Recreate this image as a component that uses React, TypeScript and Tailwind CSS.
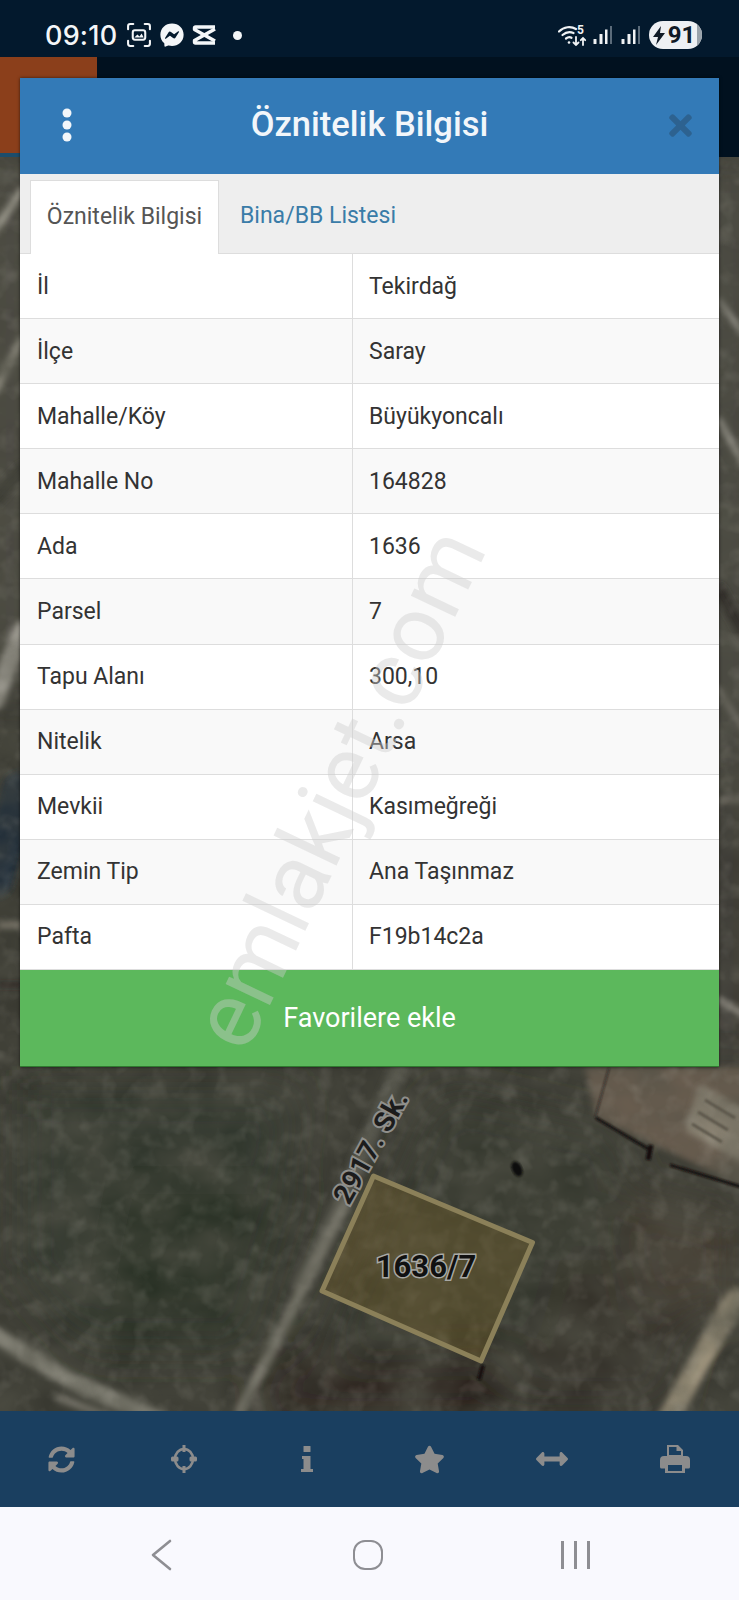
import { FaSyncAlt, FaStar, FaArrowsAltH, FaTimes, FaFacebookMessenger } from "react-icons/fa";

const rows: [string, string][] = [
  ["İl", "Tekirdağ"],
  ["İlçe", "Saray"],
  ["Mahalle/Köy", "Büyükyoncalı"],
  ["Mahalle No", "164828"],
  ["Ada", "1636"],
  ["Parsel", "7"],
  ["Tapu Alanı", "300,10"],
  ["Nitelik", "Arsa"],
  ["Mevkii", "Kasımeğreği"],
  ["Zemin Tip", "Ana Taşınmaz"],
  ["Pafta", "F19b14c2a"],
];

function ScreenshotIcon() {
  return (
    <svg width="26" height="26" viewBox="0 0 25 25" fill="none" stroke="#f4f6f8" strokeWidth="2" strokeLinecap="round">
      <path d="M2 7V4a2 2 0 0 1 2-2h3M18 2h3a2 2 0 0 1 2 2v3M23 18v3a2 2 0 0 1-2 2h-3M7 23H4a2 2 0 0 1-2-2v-3" />
      <rect x="6.500" y="8" width="12" height="9" rx="2" />
      <path d="M8 15l3-3 2 2 2-3 2 4z" fill="#f4f6f8" stroke="none" />
    </svg>
  );
}

function CapCutIcon() {
  return (
    <svg width="26" height="20" viewBox="0 0 26 20" fill="none" stroke="#f4f6f8" strokeWidth="3.400" strokeLinejoin="round">
      <path d="M24 2H4.500a1 1 0 0 0-1 1v1.500L24 16" />
      <path d="M24 18H4.500a1 1 0 0 1-1-1v-1.500L24 4" />
    </svg>
  );
}

function WifiIcon() {
  return (
    <svg width="30" height="22" viewBox="0 0 30 22" fill="none" stroke="#f0f2f4" strokeLinecap="round">
      <path d="M1 7.500C6 2.500 13 2 18 5" strokeWidth="2.200" />
      <path d="M4.500 11C8 8 12 7.500 15.500 9" strokeWidth="2.200" />
      <path d="M8 14.500c2-1.500 4-1.500 5.500-.7" strokeWidth="2.200" />
      <circle cx="11" cy="18.500" r="1.300" fill="#f0f2f4" stroke="none" />
      <path d="M18 13v8M15.500 18.500 18 21l2.500-2.500" strokeWidth="1.800" />
      <path d="M25 21v-7M22.800 16.200 25 14l2.200 2.200" strokeWidth="1.800" />
      <text x="19" y="9.500" fontSize="12" fontWeight="700" fill="#f0f2f4" stroke="none" fontFamily="Roboto, sans-serif">5</text>
    </svg>
  );
}

function SignalIcon() {
  return (
    <svg width="19" height="18" viewBox="0 0 19 18">
      <rect x="0.500" y="13" width="3" height="5" rx="0.500" fill="#f0f2f4" />
      <rect x="6.500" y="8" width="3" height="10" rx="0.500" fill="#f0f2f4" />
      <rect x="12" y="3.500" width="2.500" height="14.500" fill="#f0f2f4" />
      <rect x="17" y="0" width="2" height="18" fill="#5b6b7a" />
    </svg>
  );
}

function TargetIcon() {
  return (
    <svg width="28" height="28" viewBox="0 0 28 28" fill="#8c8c8c">
      <ellipse cx="14" cy="14" rx="9" ry="10" fill="none" stroke="#8c8c8c" strokeWidth="2.600" />
      <path d="M12.500 0h3v7h-3zM12.500 21h3v7h-3z" />
      <rect x="1" y="11.500" width="7.500" height="5" rx="1.500" />
      <rect x="19.500" y="11.500" width="7.500" height="5" rx="1.500" />
    </svg>
  );
}

function InfoIcon() {
  return (
    <svg width="12" height="26" viewBox="0 0 12 26" fill="#8c8c8c">
      <rect x="2.500" y="0" width="7" height="6" rx="0.500" />
      <path d="M1 10h8.500v13H12v3H0v-3h2.500v-10H1z" />
    </svg>
  );
}

function PrinterIcon() {
  return (
    <svg width="30" height="28" viewBox="0 0 30 28" fill="#8c8c8c">
      <path fillRule="evenodd" d="M7 0h11l5 5v7H7zM9 2v8h12V6h-4.500V2z" />
      <path fillRule="evenodd" d="M4 11h22a4 4 0 0 1 4 4v7a1.500 1.500 0 0 1-1.500 1.500H25V28H5v-4.500H1.500A1.500 1.500 0 0 1 0 22v-7a4 4 0 0 1 4-4zm4 9v6h14v-6z" />
    </svg>
  );
}

function MapPicture() {
  return (
    <svg className="absolute inset-0 h-full w-full" viewBox="0 157 739 1254" preserveAspectRatio="none">
      <defs>
        <filter id="grain" x="0" y="0" width="100%" height="100%">
          <feTurbulence type="fractalNoise" baseFrequency="0.018 0.026" numOctaves="4" seed="11" />
          <feGaussianBlur stdDeviation="2" />
          <feColorMatrix values="0 0 0 0 0.08  0 0 0 0 0.08  0 0 0 0 0.06  0.8 0.8 0 0 -0.5" />
        </filter>
        <filter id="speck" x="0" y="0" width="100%" height="100%">
          <feTurbulence type="fractalNoise" baseFrequency="0.06" numOctaves="3" seed="4" />
          <feGaussianBlur stdDeviation="1.200" />
          <feColorMatrix values="0 0 0 0 0.5  0 0 0 0 0.48  0 0 0 0 0.42  0.9 0.9 0 0 -0.85" />
        </filter>
        <filter id="soft"><feGaussianBlur stdDeviation="3" /></filter>
        <filter id="softer"><feGaussianBlur stdDeviation="22" /></filter>
        <filter id="faint"><feGaussianBlur stdDeviation="1" /></filter>
      </defs>
      <rect x="0" y="157" width="739" height="1254" fill="#393931" />
      <g filter="url(#softer)">
        <path d="M20 1090h280l-40 230-170 30-70-80z" fill="#31372d" />
        <path d="M120 1180h180l-50 170H90z" fill="#2a3127" />
        <path d="M440 1090l180 40 30 200-60 80H300z" fill="#35372e" />
        <path d="M280 1360l250-10-40 70H250z" fill="#2a241f" />
        <path d="M560 1260h150l-40 150H520z" fill="#36312b" />
        <path d="M620 1190l119 30v90h-100z" fill="#474036" />
        <path d="M0 157h20v540H0z" fill="#67645c" />
        <path d="M715 157h24v620h-24z" fill="#615d57" />
        <path d="M715 780h24v280h-24z" fill="#453f3a" />
      </g>
      <g filter="url(#soft)" fill="none" strokeLinecap="round">
        <path d="M-5 230 22 190" stroke="#9a978b" strokeWidth="8" />
        <path d="M-5 390 22 340" stroke="#a09d90" strokeWidth="8" />
        <path d="M-5 500 22 470" stroke="#35342e" strokeWidth="14" />
        <path d="M-5 700 22 630" stroke="#a5a299" strokeWidth="18" />
        <path d="M-5 880 20 790" stroke="#1d2c38" strokeWidth="36" />
        <path d="M0 925h20" stroke="#a29a8c" strokeWidth="5" />
        <path d="M0 985h20" stroke="#1b1916" strokeWidth="6" />
        <path d="M719 300l25 35" stroke="#a3a097" strokeWidth="4" />
        <path d="M719 420l25 45" stroke="#b0ada4" strokeWidth="5" />
        <path d="M719 590l25 45" stroke="#2d2a26" strokeWidth="12" />
        <path d="M719 690l25 40" stroke="#8a867d" strokeWidth="4" />
        <path d="M719 800h25" stroke="#8d887e" strokeWidth="4" />
        <path d="M719 1000l25 15" stroke="#a29e94" strokeWidth="6" />
        <path d="M398 1070 340 1205 300 1285" stroke="#57574e" strokeWidth="16" />
        <path d="M345 1205 292 1310 240 1411" stroke="#7f7d71" strokeWidth="11" />
        <path d="M-5 1335 70 1380 160 1420" stroke="#918f83" strokeWidth="16" />
        <path d="M60 1398 130 1425" stroke="#77746a" strokeWidth="8" />
        <path d="M735 1300 695 1370 668 1420" stroke="#9b917a" strokeWidth="22" />
      </g>
      <g filter="url(#soft)">
        <path d="M596 1118 585 1067h160v120z" fill="#6a5d50" />
        <path d="M700 1085l45 25v55l-60-35z" fill="#8b8373" />
      </g>
      <rect x="0" y="157" width="739" height="1254" filter="url(#grain)" />
      <rect x="0" y="157" width="739" height="1254" filter="url(#speck)" opacity="0.3" />
      <g filter="url(#faint)" fill="none">
        <path d="M596 1118 650 1150M670 1165 745 1188" stroke="#14110e" strokeWidth="3" />
        <path d="M651 1145l-3 15" stroke="#14110f" strokeWidth="5" />
        <path d="M595 1118l14-50" stroke="#1c1815" strokeWidth="2" opacity="0.6" />
        <path d="M705 1100l30 18M698 1112l30 18M692 1124l30 18" stroke="#5a5448" strokeWidth="3" />
        <path d="M483 1365l-4 15" stroke="#14110f" strokeWidth="4" />
      </g>
      <ellipse cx="517" cy="1169" rx="5" ry="8" fill="#0c0c0a" filter="url(#faint)" transform="rotate(-25 517 1169)" />
      <path d="M373.500 1176 532.500 1242.500 481 1361 322 1291z" fill="#7a6428" fillOpacity="0.35" stroke="#8b8059" strokeWidth="5" strokeLinejoin="round" />
      <text x="426" y="1277" textAnchor="middle" fontSize="31" fontWeight="700" fontFamily="Roboto, sans-serif" fill="#111" stroke="#a9a9a5" strokeWidth="3" paintOrder="stroke">1636/7</text>
      <text transform="translate(349 1206) rotate(-61)" fontSize="28" fontWeight="700" letterSpacing="0.500" fontFamily="Roboto, sans-serif" fill="#1c1c1c" stroke="#8f8f8b" strokeWidth="4" paintOrder="stroke">2917. Sk.</text>
    </svg>
  );
}

export default function App() {
  return (
    <div className="relative flex h-[1600px] w-[739px] flex-col overflow-hidden bg-[#021729] [font-family:Roboto,sans-serif]">
      <div className="flex h-[57px] shrink-0 items-center justify-between bg-[#03192d] pl-[45px] pr-[37px] pt-[13px]">
        <div className="flex items-center">
          <span className="w-[69px] text-[27px] font-medium leading-none tracking-[0.2px] text-[#f4f6f8] [font-family:Inter,sans-serif]">09:10</span>
          <span className="ml-[12px] flex"><ScreenshotIcon /></span>
          <FaFacebookMessenger className="ml-[8px] text-[24px] text-[#f4f6f8]" />
          <span className="ml-[7px] flex"><CapCutIcon /></span>
          <span className="ml-[16px] h-[9px] w-[9px] rounded-full bg-[#f4f6f8]" />
        </div>
        <div className="flex items-center">
          <WifiIcon />
          <span className="ml-[5px] flex"><SignalIcon /></span>
          <span className="ml-[9px] flex"><SignalIcon /></span>
          <span className="relative ml-[9px] flex h-[28px] w-[53px] items-center justify-center gap-[3px] overflow-hidden rounded-full bg-[#eef0f3] pr-[3px] text-[24px] font-bold leading-none text-[#101a26]">
            <svg width="12" height="19" viewBox="0 0 12 19"><path d="M8 0 0 11h5L3 19l9-12H7z" fill="#101a26" /></svg>
            91
            <span className="absolute inset-y-0 right-0 w-[5px] bg-[#9aa3ab]" />
          </span>
        </div>
      </div>

      <div className="h-[100px] shrink-0 bg-[#01111f]">
        <div className="h-[100px] w-[97px] border-b-[4px] border-[#1c4d6b] bg-[#8b3f1b]" />
      </div>

      <div className="relative flex-1">
        <MapPicture />
      </div>

      <div className="grid h-[96px] shrink-0 grid-cols-6 items-center bg-[#1a3f60] pr-[3px] text-[#8c8c8c]">
        <span className="flex justify-center"><FaSyncAlt className="text-[27px]" /></span>
        <span className="flex justify-center"><TargetIcon /></span>
        <span className="flex justify-center"><InfoIcon /></span>
        <span className="flex justify-center"><FaStar className="text-[31px]" /></span>
        <span className="flex justify-center"><FaArrowsAltH className="text-[32px]" /></span>
        <span className="flex justify-center"><PrinterIcon /></span>
      </div>

      <div className="flex h-[93px] shrink-0 items-center bg-[#f9f9fe] pb-[2px]">
        <svg className="absolute left-[151px] top-[1539px]" width="22" height="32" viewBox="0 0 22 32" fill="none" stroke="#8e8e93" strokeWidth="2.600" strokeLinecap="round" strokeLinejoin="round"><path d="M19 2 2 16l17 14" /></svg>
        <span className="absolute left-[353px] top-[1540px] h-[30px] w-[30px] rounded-[12px] border-[2.500px] border-[#8e8e93]" />
        <div className="absolute left-[561px] top-[1541px] flex h-[28px] gap-[10.500px]">
          <span className="w-[2.500px] bg-[#8e8e93]" />
          <span className="w-[2.500px] bg-[#8e8e93]" />
          <span className="w-[2.500px] bg-[#8e8e93]" />
        </div>
      </div>

      <div className="absolute left-[20px] top-[78px] flex w-[699px] flex-col shadow-[0_0_3px_rgba(0,0,0,0.6)]">
        <div className="relative flex h-[96px] items-center justify-center bg-[#337ab7] pb-[3px]">
          <svg className="absolute left-[37px] top-[30px]" width="20" height="34" viewBox="0 0 20 34" fill="#f2f6fa"><circle cx="10" cy="5" r="4.500" /><circle cx="10" cy="17" r="4.500" /><circle cx="10" cy="29" r="4.500" /></svg>
          <span className="text-[34.500px] font-medium leading-none text-[#f2f6fa]">Öznitelik Bilgisi</span>
          <FaTimes className="absolute left-[644px] top-[31px] text-[33px] text-[#2d6290]" />
        </div>
        <div className="flex h-[80px] items-end border-b border-[#ddd] bg-[#eeeeee] pl-[10px]">
          <div className="-mb-px flex h-[74px] w-[189px] items-center justify-center border border-b-0 border-[#ddd] bg-white text-[23px] text-[#555555]">Öznitelik Bilgisi</div>
          <div className="flex h-[74px] items-center pl-[21px] text-[23px] text-[#3a7ca8]">Bina/BB Listesi</div>
        </div>
        <div className="flex flex-col">
          {rows.map(([label, value], i) => (
            <div key={label} className={`grid h-[65.100px] grid-cols-[333px_1fr] border-b-[1.500px] border-[#dddddd] text-[23px] leading-none text-[#333333] ${i % 2 ? "bg-[#f9f9f9]" : "bg-white"}`}>
              <div className="flex items-center border-r-[1.500px] border-[#dddddd] pl-[17px]">{label}</div>
              <div className="flex items-center pl-[16px]">{value}</div>
            </div>
          ))}
        </div>
        <div className="flex h-[97px] items-center justify-center border-b border-[#2f7a2f] bg-[#5cb85c] text-[27px] text-white">Favorilere ekle</div>
      </div>

      <div className="pointer-events-none absolute left-[218px] top-[992px] origin-left -rotate-[64.500deg] whitespace-nowrap text-[93px] leading-[100px] text-[rgba(205,205,205,0.42)] [font-family:Roboto,sans-serif]">emlakjet.com</div>
    </div>
  );
}
